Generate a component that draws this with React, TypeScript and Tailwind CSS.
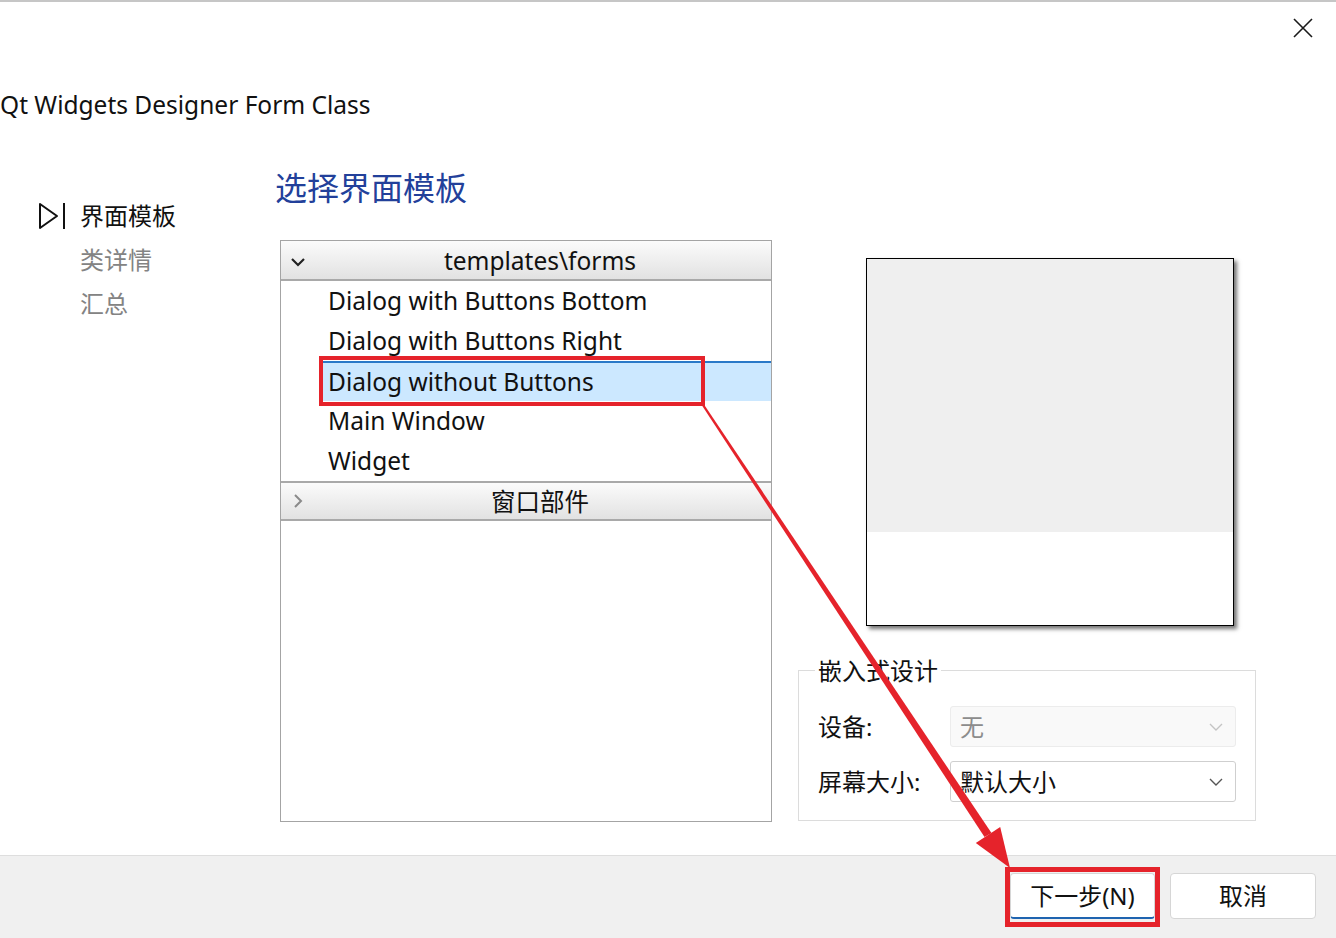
import React from 'react';

const FONT = { fontFamily: '"Noto Sans", "Noto Sans CJK SC", sans-serif' };

const templates = [
    'Dialog with Buttons Bottom',
    'Dialog with Buttons Right',
    'Dialog without Buttons',
    'Main Window',
    'Widget',
];

const ChevronDown = ({ className = '' }: { className?: string }) => (
    <svg viewBox="0 0 16 10" className={className} fill="none" stroke="currentColor" strokeWidth="2.2">
        <path d="M2 2 L8 8 L14 2" />
    </svg>
);

const TreeHeader = ({ label, open, top }: { label: string; open: boolean; top?: boolean }) => (
    <div
        className={`relative flex h-[40px] items-center justify-center border-b-2 border-[#a9a9a9] bg-gradient-to-b from-[#fbfbfb] to-[#e2e2e2] pl-[28px] ${top ? 'pt-[3px]' : 'border-t-2 border-t-[#a9a9a9] pt-[2px]'}`}
    >
        {open ? (
            <ChevronDown className="absolute left-[9px] top-[16px] h-[10px] w-[16px] text-[#222]" />
        ) : (
            <svg viewBox="0 0 10 16" className="absolute left-[12px] top-[10px] h-[16px] w-[10px] text-[#8a8a8a]" fill="none" stroke="currentColor" strokeWidth="2">
                <path d="M2 2 L8 8 L2 14" />
            </svg>
        )}
        <span className="text-[24.5px] leading-none text-[#111]">{label}</span>
    </div>
);

const Combo = ({ value, disabled }: { value: string; disabled?: boolean }) => (
    <div
        className={`flex h-[41px] w-[286px] items-center justify-between rounded-[3px] border pl-[9px] pr-[12px] ${disabled ? 'border-[#ececec] bg-[#f9f9f9] text-[#8c8c8c]' : 'border-[#cfcfcf] bg-white text-[#111]'}`}
    >
        <span className="text-[24px] leading-none">{value}</span>
        <svg viewBox="0 0 14 8" className={`h-[8px] w-[14px] ${disabled ? 'text-[#c4c4c4]' : 'text-[#555]'}`} fill="none" stroke="currentColor" strokeWidth="1.4">
            <path d="M1 1 L7 7 L13 1" />
        </svg>
    </div>
);

export default function App() {
    return (
        <div className="relative flex h-[938px] w-[1336px] flex-col overflow-hidden bg-white" style={FONT}>
            {/* window top edge */}
            <div className="h-[2px] bg-[#c6c6c6]" />

            {/* Title bar */}
            <div className="flex h-[88px] justify-end pr-[23px] pt-[16px]">
                <svg viewBox="0 0 20 20" className="h-[20px] w-[20px] text-[#1a1a1a]" stroke="currentColor" strokeWidth="1.6">
                    <path d="M1 1 L19 19 M19 1 L1 19" />
                </svg>
            </div>
            <div className="h-[32px] text-[24.5px] leading-[30px] text-[#111]">Qt Widgets Designer Form Class</div>

            {/* Body */}
            <div className="flex flex-1">
                {/* Wizard steps */}
                <div className="w-[275px] pl-[38px] pt-[72px]">
                    <div className="flex h-[44px] items-center">
                        <svg viewBox="0 0 28 28" className="h-[28px] w-[28px] text-[#111]" fill="none" stroke="currentColor" strokeWidth="2">
                            <path d="M2 2 L19 14 L2 26 Z" strokeLinejoin="round" />
                            <path d="M26 1 L26 27" />
                        </svg>
                        <span className="ml-[14px] text-[24px] text-[#111]">界面模板</span>
                    </div>
                    <div className="flex h-[44px] items-center pl-[42px] text-[24px] text-[#838383]">类详情</div>
                    <div className="flex h-[44px] items-center pl-[42px] text-[24px] text-[#838383]">汇总</div>
                </div>

                {/* Templates */}
                <div className="w-[497px] pt-[46px]">
                    <div className="h-[40px] text-[32px] leading-[40px] text-[#22409a]">选择界面模板</div>
                    <div className="ml-[5px] mt-[32px] h-[582px] border border-[#a4a4a4] bg-white">
                        <TreeHeader label="templates\forms" open top />
                        {templates.map((t, i) => (
                            <div key={t} className="flex h-[40px]">
                                <div className="w-[40px]" />
                                <div
                                    className={`flex flex-1 items-center pl-[7px] ${i === 2 ? 'border-t-2 border-[#2a79c8] bg-[#cce8ff]' : ''}`}
                                >
                                    <span className="text-[24.5px] leading-none text-[#111]">{t}</span>
                                </div>
                            </div>
                        ))}
                        <TreeHeader label="窗口部件" open={false} />
                    </div>
                </div>

                {/* Preview & embedded design */}
                <div className="flex-1 pt-[136px]">
                    <div className="ml-[94px] flex h-[368px] w-[368px] flex-col border border-black bg-white shadow-[3px_3px_4px_rgba(0,0,0,0.55)]">
                        <div className="h-[273px] bg-[#efefef]" />
                    </div>
                    <div className="relative ml-[26px] mt-[44px] h-[151px] w-[458px] border border-[#dcdcdc] pl-[19px] pt-[35px]">
                        <span className="absolute left-[16px] top-[-15px] bg-white px-[3px] text-[24px] leading-[30px] text-[#111]">嵌入式设计</span>
                        <div className="flex h-[41px] items-center">
                            <span className="w-[132px] text-[24px] text-[#111]">设备:</span>
                            <Combo value="无" disabled />
                        </div>
                        <div className="mt-[14px] flex h-[41px] items-center">
                            <span className="w-[132px] text-[24px] text-[#111]">屏幕大小:</span>
                            <Combo value="默认大小" />
                        </div>
                    </div>
                </div>
            </div>

            {/* Footer */}
            <div className="flex h-[83px] justify-end gap-[15px] border-t border-[#dedede] bg-[#f0f0f0] pr-[20px] pt-[17px]">
                <button className="flex h-[46px] w-[145px] items-center justify-center rounded-[4px] border border-[#d6d6d6] border-b-2 border-b-[#1f64b0] bg-white text-[24px] text-[#111]">
                    下一步(N)
                </button>
                <button className="flex h-[46px] w-[146px] items-center justify-center rounded-[4px] border border-[#d6d6d6] bg-white text-[24px] text-[#111]">
                    取消
                </button>
            </div>

            {/* Annotations */}
            <div className="absolute left-[319px] top-[356px] h-[50px] w-[386px] border-4 border-[#e5232b]" />
            <div className="absolute left-[1005px] top-[867px] h-[60px] w-[155px] border-[5px] border-[#e5232b]" />
            <svg className="pointer-events-none absolute left-0 top-0 h-[938px] w-[1336px]" viewBox="0 0 1336 938">
                <polygon points="702,405.6 704,404.4 991.5,833.1 984.5,836.9" fill="#e5232b" />
                <polygon points="1010,868 975.8,843 1000.2,827" fill="#e5232b" />
            </svg>
        </div>
    );
}
